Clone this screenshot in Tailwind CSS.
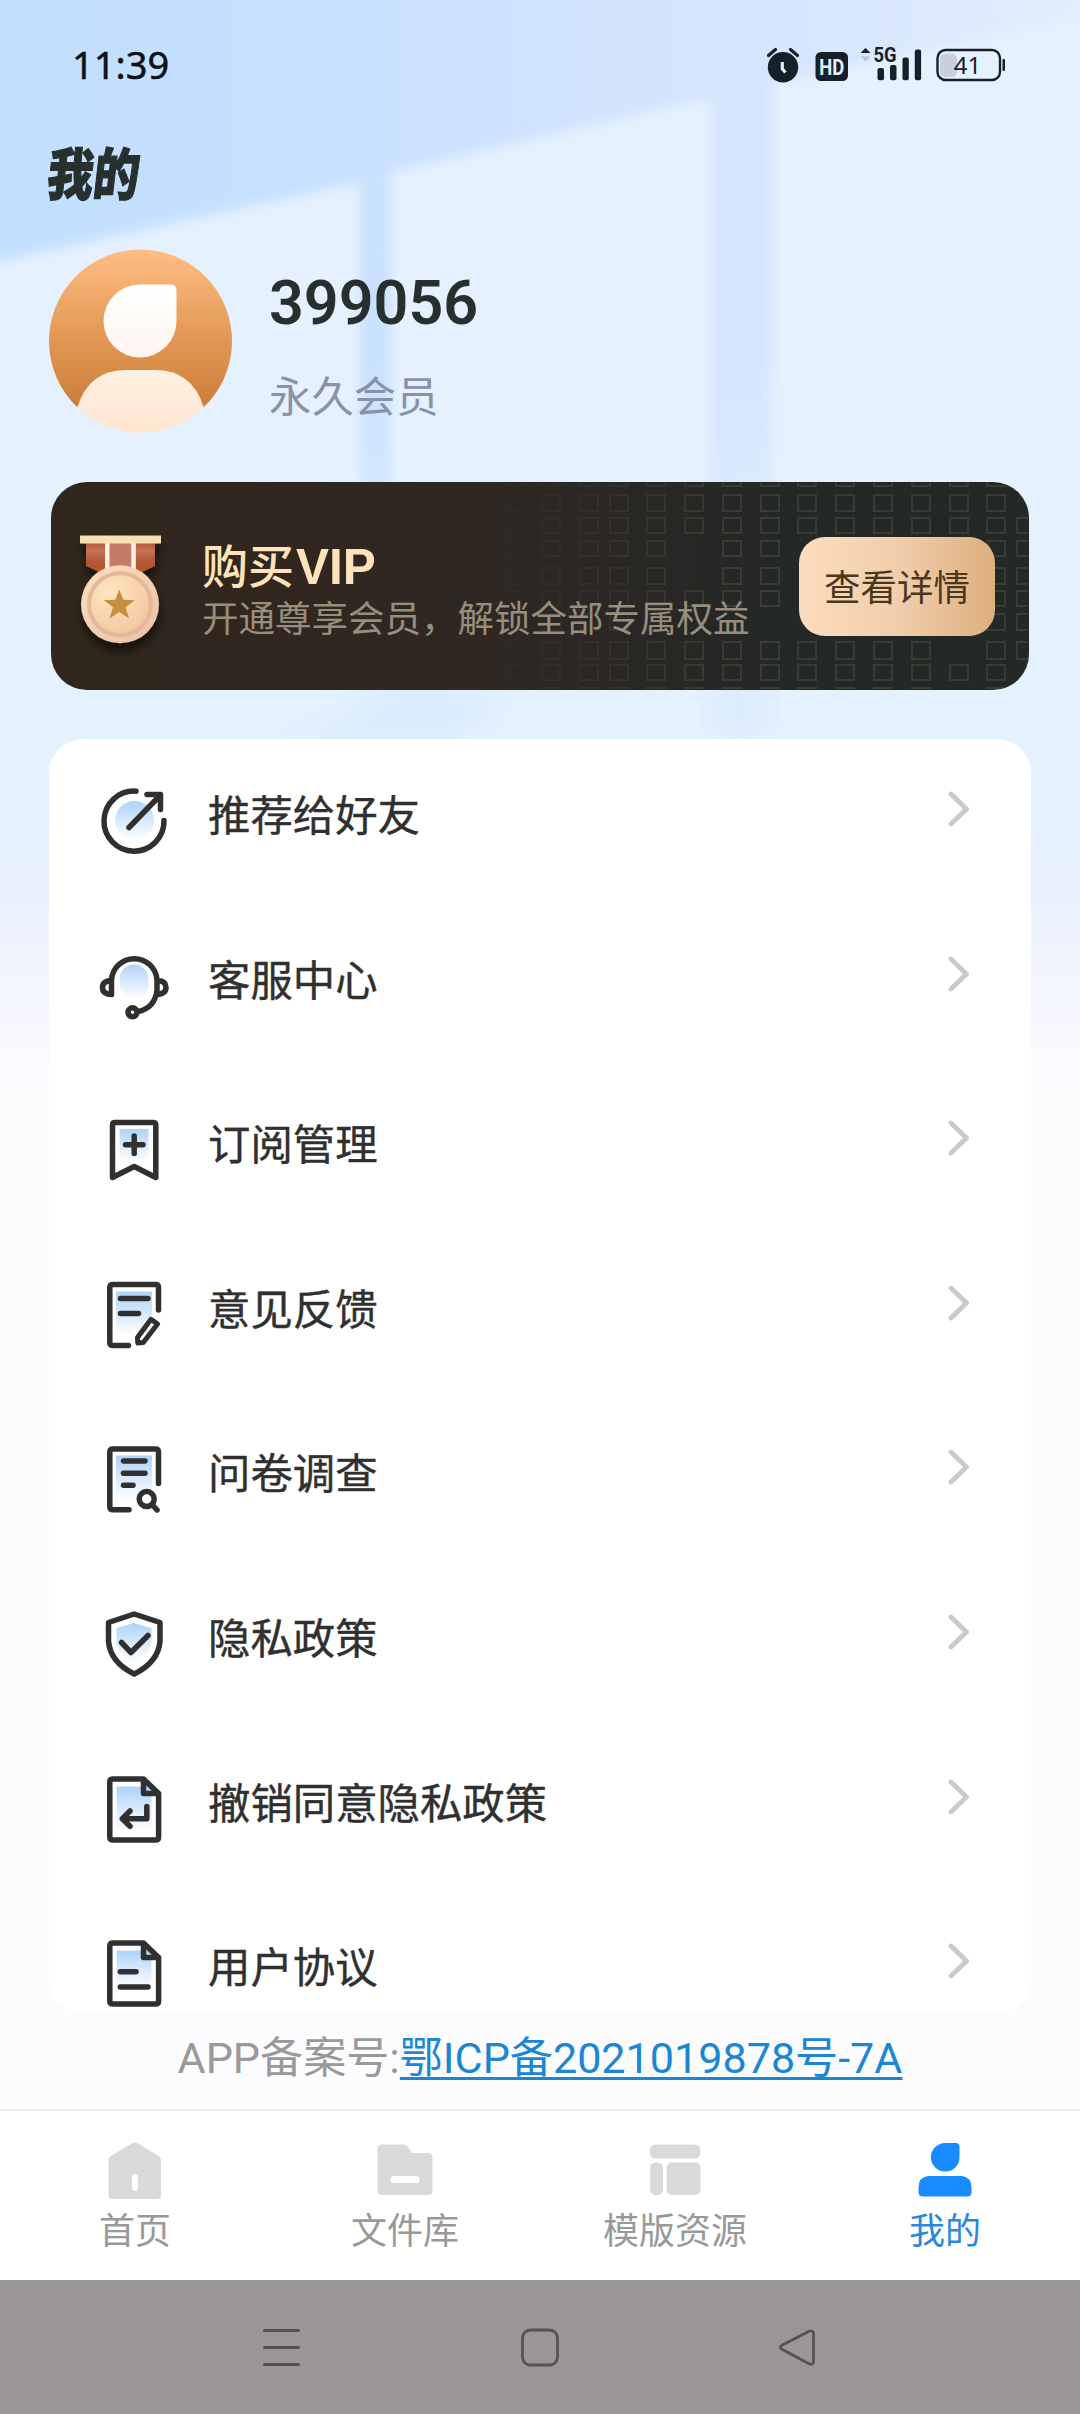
<!DOCTYPE html>
<html lang="zh-CN">
<head>
<meta charset="UTF-8">
<title>我的</title>
<script src="https://cdn.jsdelivr.net/npm/@tailwindcss/browser@4"></script>
</head>
<body class="w-[1080px] h-[2414px] overflow-hidden bg-[#fcfbfe] font-['Roboto','Noto_Sans_CJK_SC',sans-serif] text-[#303030]">
<div class="relative flex h-[2414px] w-[1080px] flex-col overflow-hidden">

  <!-- window-light backdrop -->
  <svg class="absolute inset-0 -z-10" width="1080" height="1200" viewBox="0 0 1080 1200" aria-hidden="true">
    <defs>
      <linearGradient id="sky" x1="0" y1="0" x2="1080" y2="0" gradientUnits="userSpaceOnUse">
        <stop offset="0" stop-color="#c3dffe"/><stop offset=".28" stop-color="#c6e0fe"/><stop offset=".4" stop-color="#cce2fe"/><stop offset=".6" stop-color="#d4e4fe"/><stop offset=".8" stop-color="#d9e7fe"/><stop offset="1" stop-color="#e2eefe"/>
      </linearGradient>
      <linearGradient id="fade" x1="0" y1="0" x2="0" y2="1200" gradientUnits="userSpaceOnUse">
        <stop offset="0" stop-color="#e5f1fe" stop-opacity="0"/><stop offset=".3" stop-color="#e5f1fe" stop-opacity="0"/><stop offset=".6" stop-color="#e4f1fe"/><stop offset=".7" stop-color="#e5f1fe"/><stop offset=".75" stop-color="#eaf1fe"/><stop offset=".82" stop-color="#f3f5ff"/><stop offset=".9" stop-color="#fcfbfe"/><stop offset="1" stop-color="#fcfbfe"/>
      </linearGradient>
      <filter id="soft" x="-10%" y="-10%" width="120%" height="120%"><feGaussianBlur stdDeviation="6"/></filter>
      <filter id="softer" x="-20%" y="-60%" width="140%" height="220%"><feGaussianBlur stdDeviation="14"/></filter>
    </defs>
    <rect width="1080" height="1200" fill="url(#sky)"/>
    <g filter="url(#soft)" fill="#e5f1fe">
      <path d="M-40 270L360 182V1240H-40Z"/>
      <path d="M391 172L710 98V1240H391Z"/>
      <path d="M772 84L1120 8V1240H772Z"/>
    </g>
    <rect width="1080" height="1200" fill="url(#fade)"/>
    <path d="M270 745Q360 715 400 680L500 690Q480 745 420 745Z" fill="#d6e8fe" opacity=".6" filter="url(#softer)"/>
    <rect x="712" y="680" width="56" height="60" fill="#d9e9fe" opacity=".7" filter="url(#softer)"/>
  </svg>

  <!-- status bar -->
  <header class="flex h-[130px] items-center justify-between pl-[72px] pr-[74px]">
    <span class="-mt-[2px] font-['Noto_Sans'] text-[38px] leading-none text-[#0d1218] [-webkit-text-stroke:0.5px]">11:39</span>
    <svg class="overflow-visible" width="241" height="60" viewBox="765 35 241 60" fill="#15202a">
      <circle cx="783" cy="67.300" r="15.200"/>
      <path d="M768.500 55.500l7-6M790.500 49.500l7 6" stroke="#15202a" stroke-width="3.200" stroke-linecap="round"/>
      <path d="M782.300 62v7l3.200 3.500" fill="none" stroke="#e4effc" stroke-width="3.200"/>
      <rect x="815.500" y="52" width="32.500" height="29" rx="5.500"/>
      <text x="831.800" y="74.500" text-anchor="middle" font-family="Roboto" font-weight="700" font-size="22" textLength="25" lengthAdjust="spacingAndGlyphs" fill="#e4effc">HD</text>
      <path d="M865.500 48l5 5h-10z"/><path d="M865.500 61.500l5-5h-10z" fill="#b9c4d2"/>
      <text x="873.500" y="62" font-family="Roboto" font-weight="700" font-size="20.500" textLength="23" lengthAdjust="spacingAndGlyphs">5G</text>
      <rect x="877.500" y="68" width="6.500" height="12.200" rx="2"/>
      <rect x="890" y="65" width="6.500" height="15.200" rx="2"/>
      <rect x="902.500" y="57.500" width="6.300" height="22.700" rx="2"/>
      <rect x="914.800" y="49.500" width="6.300" height="30.700" rx="2"/>
      <rect x="940" y="53.500" width="17" height="23.500" rx="5" fill="#cacfdd"/>
      <rect x="937.500" y="50" width="62.500" height="30" rx="8" fill="none" stroke="#15202a" stroke-width="2.400"/>
      <rect x="1002.500" y="59" width="2.500" height="12" rx="1"/>
      <text x="967.500" y="73.500" text-anchor="middle" font-family="Noto Sans" font-size="24">41</text>
    </svg>
  </header>

  <h1 class="ml-[48px] -mt-px h-[88px] w-[100px] origin-center -skew-x-[8deg] scale-y-[1.22] text-[46px] font-black leading-[92px] text-[#28302f] [-webkit-text-stroke:1px]">我的</h1>

  <!-- profile -->
  <section class="mt-[32px] flex h-[184px] items-start gap-[36px] pl-[49px]">
    <svg width="184" height="184" viewBox="0.500 0 184 184">
      <defs>
        <linearGradient id="av" x1="0" y1="0" x2="0" y2="1"><stop offset="0" stop-color="#ffbd85"/><stop offset=".5" stop-color="#e59c58"/><stop offset="1" stop-color="#cb7d39"/></linearGradient>
        <linearGradient id="bd" x1="0" y1="0" x2="0" y2="1"><stop offset="0" stop-color="#fff0e2"/><stop offset="1" stop-color="#fee6d0"/></linearGradient>
        <linearGradient id="hd" x1="0" y1="0" x2="0" y2="1"><stop offset="0" stop-color="#fff"/><stop offset="1" stop-color="#fff5f0"/></linearGradient>
        <clipPath id="cc"><circle cx="92" cy="92" r="91.800"/></clipPath>
      </defs>
      <path d="M30 159.300A91.500 91.500 0 1 1 154 159.300Z" fill="url(#av)"/>
      <path d="M91.500 35.500H122Q128 35.500 128 41.500V72A36.500 36.500 0 1 1 91.500 35.500Z" fill="url(#hd)"/>
      <path clip-path="url(#cc)" d="M26 186L29 158Q40 121 78 121H106Q144 121 155 158L158 186Z" fill="url(#bd)"/>
    </svg>
    <div class="flex flex-col">
      <div class="mt-[19px] text-[61px] font-semibold leading-[70px] text-[#28302f]">399056</div>
      <div class="mt-[30px] text-[42.400px] leading-[60px] text-[#8a92a8]">永久会员</div>
    </div>
  </section>

  <!-- vip banner -->
  <section class="relative ml-[51px] mt-[49px] flex h-[208px] w-[978px] items-center overflow-hidden rounded-[36px] bg-gradient-to-r from-[#30261b] via-[#302722] via-40% to-[#242827] to-75%">
    <svg class="absolute inset-0" width="978" height="208" viewBox="0 0 978 208" fill="none" stroke="#45433a" stroke-width="2">
      <defs>
        <linearGradient id="mg" x1="420" x2="690" y1="0" y2="0" gradientUnits="userSpaceOnUse"><stop offset="0" stop-color="#fff" stop-opacity="0"/><stop offset="1" stop-color="#fff"/></linearGradient>
        <mask id="mk" maskUnits="userSpaceOnUse" x="0" y="0" width="978" height="208"><rect width="978" height="208" fill="url(#mg)"/></mask>
        <g id="ends"><path d="M0-14h18v18H0zM0 13h18v16H0zM0 36h18v15H0zM0 160h18v17H0zM0 183h18v15H0zM0 206h18v18H0z"/></g>
        <g id="mids"><path d="M0 59h18v15H0zM0 86h18v16H0zM0 109h18v15H0zM0 132h18v16H0z"/></g>
      </defs>
      <g mask="url(#mk)" opacity=".7">
        <use href="#ends" x="454"/><use href="#mids" x="454"/>
        <use href="#ends" x="491"/><use href="#mids" x="491"/>
        <use href="#ends" x="529"/><use href="#mids" x="529"/>
        <use href="#ends" x="559"/><use href="#mids" x="559"/>
        <use href="#ends" x="596"/><use href="#mids" x="596"/>
        <use href="#ends" x="634"/><path d="M634 109h18v15h-18z"/>
        <use href="#ends" x="672"/><path d="M672 59h18v15h-18zM672 86h18v16h-18zM672 109h18v15h-18z"/>
        <use href="#ends" x="710"/><path d="M710 59h18v15h-18zM710 86h18v16h-18zM710 109h18v15h-18z"/>
        <use href="#ends" x="747"/><use href="#ends" x="785"/><use href="#ends" x="823"/><use href="#ends" x="861"/>
        <path d="M899-14h18v18h-18zM899 13h18v16h-18zM899 36h18v15h-18zM899 183h18v15h-18z"/>
        <use href="#ends" x="936"/><use href="#mids" x="936"/>
        <path d="M966 36h18v15h-18zM966 160h18v17h-18z"/><use href="#mids" x="966"/>
      </g>
    </svg>
    <svg class="relative ml-[19px] mt-[18px] shrink-0" width="104" height="140" viewBox="0 0 104 140">
      <defs>
        <linearGradient id="rb" x1="0" x2="0" y1="0" y2="1"><stop offset="0" stop-color="#a84a2c"/><stop offset=".35" stop-color="#c77259"/><stop offset=".6" stop-color="#b45a3c"/><stop offset="1" stop-color="#b85128"/></linearGradient>
        <linearGradient id="ds" x1="0" x2="1" y1="0" y2="1"><stop offset="0" stop-color="#f9dec0"/><stop offset="1" stop-color="#ecc2a6"/></linearGradient>
        <radialGradient id="in" cx=".35" cy=".3" r=".8"><stop offset="0" stop-color="#ffe6bf"/><stop offset="1" stop-color="#f1c5a0"/></radialGradient>
        <filter id="sh" x="-30%" y="-30%" width="160%" height="170%"><feDropShadow dx="1" dy="8" stdDeviation="5" flood-color="#000" flood-opacity=".55"/></filter>
      </defs>
      <g filter="url(#sh)">
        <path d="M16 14H85V41L70 48H31L16 41Z" fill="url(#rb)"/>
        <path d="M39 16H62V48H39Z" fill="#c47b68"/>
        <path d="M35 16h4.500v30H35zM61.300 16h4.500v30h-4.500z" fill="#fff0df"/>
        <path d="M10 10.500h81v8H10z" fill="#f9dfb4"/>
        <circle cx="50" cy="79.300" r="39" fill="url(#ds)"/>
      </g>
      <circle cx="50" cy="79.300" r="31" fill="url(#in)" stroke="#e4b898" stroke-width="4"/>
      <path d="M49.300 64.500l4 10.300 11.500.4-9.200 7 3.500 11.300-9.800-6.600-9.800 6.600 3.500-11.300-9.200-7 11.500-.4z" fill="#c58f3e"/>
    </svg>
    <div class="relative ml-[28px] mt-[10px] flex flex-col">
      <div class="flex items-center text-[46px] font-medium leading-[58px] text-[#fde2bc]">购买<span class="-mt-px ml-[2px] font-['Liberation_Sans'] text-[49.500px] font-bold">VIP</span></div>
      <div class="whitespace-nowrap text-[36.500px] leading-[48px] text-[#998d7c]">开通尊享会员，解锁全部专属权益</div>
    </div>
    <button class="absolute left-[748px] top-[55px] flex h-[99px] w-[196px] items-center justify-center rounded-[26px] bg-gradient-to-r from-[#fbdcbc] via-[#f1ceac] to-[#deaf7e] pt-[6px] text-[36.500px] text-[#49371e]">查看详情</button>
  </section>

  <!-- menu card -->
  <svg class="absolute" width="0" height="0">
    <defs>
      <linearGradient id="bl" x1="0" x2="0" y1="0" y2="1"><stop offset="0" stop-color="#aed3fa"/><stop offset="1" stop-color="#fff"/></linearGradient>
    </defs>
  </svg>
  <main class="ml-[49px] mt-[49px] flex h-[1274px] w-[982px] flex-col overflow-hidden rounded-[34px] bg-white [-webkit-text-stroke:0.4px]">
    <div class="flex h-[164.600px] shrink-0 items-start pl-[49px] pr-[60px] pt-[46px]">
      <svg width="72" height="72" viewBox="0 0 72 72" fill="none" stroke="#303030" stroke-width="5.500" stroke-linecap="round" stroke-linejoin="round"><circle cx="36.500" cy="35.500" r="19.500" fill="url(#bl)" stroke="none"/><path d="M38 6.200A30 30 0 1 0 66 35.500M31 42.500L62.500 10M49 9.500H62.500V24.500"/></svg>
      <span class="ml-[38px] mt-[2px] text-[42.400px] leading-[60px]">推荐给好友</span>
      <svg class="ml-auto mt-[6px]" width="24" height="36" viewBox="0 0 24 36" fill="none" stroke="#cacaca" stroke-width="4.800" stroke-linecap="round" stroke-linejoin="round"><path d="M4 3L19.500 18L4 33"/></svg>
    </div>
    <div class="flex h-[164.600px] shrink-0 items-start pl-[49px] pr-[60px] pt-[46px]">
      <svg width="72" height="72" viewBox="0 0 72 72" fill="none" stroke="#303030" stroke-width="5.500" stroke-linecap="round" stroke-linejoin="round"><rect x="21.500" y="14.500" width="29" height="34" rx="14.500" fill="url(#bl)" stroke="none"/><path d="M13.500 44.500V30A22.800 22.800 0 0 1 59 30V40Q57 58 40 61.500M13.500 30.500Q4.500 31 4.500 37.500T13.500 44.500M59.500 30.500Q68 31 68 37.500T58.500 44.500"/><circle cx="34.500" cy="62.300" r="4.500"/></svg>
      <span class="ml-[38px] mt-[2px] text-[42.400px] leading-[60px]">客服中心</span>
      <svg class="ml-auto mt-[6px]" width="24" height="36" viewBox="0 0 24 36" fill="none" stroke="#cacaca" stroke-width="4.800" stroke-linecap="round" stroke-linejoin="round"><path d="M4 3L19.500 18L4 33"/></svg>
    </div>
    <div class="flex h-[164.600px] shrink-0 items-start pl-[49px] pr-[60px] pt-[46px]">
      <svg width="72" height="72" viewBox="0 0 72 72" fill="none" stroke="#303030" stroke-width="5.500" stroke-linecap="round" stroke-linejoin="round"><path d="M21.500 15h29v32h-29z" fill="url(#bl)" stroke="none"/><path d="M14.500 63.500V11Q14.500 8.500 17 8.500H55Q57.800 8.500 57.800 11V63.500L36.200 52.500ZM27.500 30.800h17.500M36.200 22v17.500"/></svg>
      <span class="ml-[38px] mt-[2px] text-[42.400px] leading-[60px]">订阅管理</span>
      <svg class="ml-auto mt-[6px]" width="24" height="36" viewBox="0 0 24 36" fill="none" stroke="#cacaca" stroke-width="4.800" stroke-linecap="round" stroke-linejoin="round"><path d="M4 3L19.500 18L4 33"/></svg>
    </div>
    <div class="flex h-[164.600px] shrink-0 items-start pl-[49px] pr-[60px] pt-[46px]">
      <svg width="72" height="72" viewBox="0 0 72 72" fill="none" stroke="#303030" stroke-width="5.500" stroke-linecap="round" stroke-linejoin="round"><path d="M18 12.500h36v44h-36z" fill="url(#bl)" stroke="none"/><path d="M30.500 66.500H15Q11.800 66.500 11.800 63.500V8.500Q11.800 5.500 15 5.500H57.500Q60.500 5.500 60.500 8.500V31M22.500 19.500H50M22.500 34.500H40.500"/><path d="M53 40.300L59.500 45L45.300 63.500L39.800 64L39.500 58.500Z" stroke-width="5"/></svg>
      <span class="ml-[38px] mt-[2px] text-[42.400px] leading-[60px]">意见反馈</span>
      <svg class="ml-auto mt-[6px]" width="24" height="36" viewBox="0 0 24 36" fill="none" stroke="#cacaca" stroke-width="4.800" stroke-linecap="round" stroke-linejoin="round"><path d="M4 3L19.500 18L4 33"/></svg>
    </div>
    <div class="flex h-[164.600px] shrink-0 items-start pl-[49px] pr-[60px] pt-[46px]">
      <svg width="72" height="72" viewBox="0 0 72 72" fill="none" stroke="#303030" stroke-width="5.500" stroke-linecap="round" stroke-linejoin="round"><path d="M18 12.500h36v44h-36z" fill="url(#bl)" stroke="none"/><path d="M31 66.700H15Q11.800 66.700 11.800 63.700V9Q11.800 6 15 6H57.500Q60.500 6 60.500 9V40.500M25.500 18H47M25.500 30.300H47M25.500 42.300H35"/><circle cx="48.700" cy="56" r="7.500" fill="#fff"/><path d="M54.500 62L59 67"/></svg>
      <span class="ml-[38px] mt-[2px] text-[42.400px] leading-[60px]">问卷调查</span>
      <svg class="ml-auto mt-[6px]" width="24" height="36" viewBox="0 0 24 36" fill="none" stroke="#cacaca" stroke-width="4.800" stroke-linecap="round" stroke-linejoin="round"><path d="M4 3L19.500 18L4 33"/></svg>
    </div>
    <div class="flex h-[164.600px] shrink-0 items-start pl-[49px] pr-[60px] pt-[46px]">
      <svg width="72" height="72" viewBox="0 0 72 72" fill="none" stroke="#303030" stroke-width="5.500" stroke-linecap="round" stroke-linejoin="round"><path d="M18.500 20L36 15L53.500 20V36Q50 48 36 54Q22 48 18.500 36Z" fill="url(#bl)" stroke="none"/><path d="M36.200 6L62 14.500V33Q60.500 54 36.200 66Q12 54 10.500 33V14.500ZM23.500 34.500L33 44.500L50 27.500"/></svg>
      <span class="ml-[38px] mt-[2px] text-[42.400px] leading-[60px]">隐私政策</span>
      <svg class="ml-auto mt-[6px]" width="24" height="36" viewBox="0 0 24 36" fill="none" stroke="#cacaca" stroke-width="4.800" stroke-linecap="round" stroke-linejoin="round"><path d="M4 3L19.500 18L4 33"/></svg>
    </div>
    <div class="flex h-[164.600px] shrink-0 items-start pl-[49px] pr-[60px] pt-[46px]">
      <svg width="72" height="72" viewBox="0 0 72 72" fill="none" stroke="#303030" stroke-width="5.500" stroke-linecap="round" stroke-linejoin="round"><path d="M18.500 13.500h35v44h-35z" fill="url(#bl)" stroke="none"/><path d="M45.500 6H15Q11.800 6 11.800 9V64Q11.800 67 15 67H57.500Q60.600 67 60.600 64V20.500ZM45.500 6V20.500H60.600"/><path d="M48.800 33.500V45.700H24.500M32 38L24.300 45.700L32 53.300"/></svg>
      <span class="ml-[38px] mt-[2px] text-[42.400px] leading-[60px]">撤销同意隐私政策</span>
      <svg class="ml-auto mt-[6px]" width="24" height="36" viewBox="0 0 24 36" fill="none" stroke="#cacaca" stroke-width="4.800" stroke-linecap="round" stroke-linejoin="round"><path d="M4 3L19.500 18L4 33"/></svg>
    </div>
    <div class="flex h-[164.600px] shrink-0 items-start pl-[49px] pr-[60px] pt-[46px]">
      <svg width="72" height="72" viewBox="0 0 72 72" fill="none" stroke="#303030" stroke-width="5.500" stroke-linecap="round" stroke-linejoin="round"><path d="M18.500 13.500h35v38h-35z" fill="url(#bl)" stroke="none"/><path d="M45.500 6H15Q11.800 6 11.800 9V64Q11.800 67 15 67H57.500Q60.600 67 60.600 64V20.500ZM45.500 6V20.500H60.600"/><path d="M22.300 34.800H38M22.300 50H50"/></svg>
      <span class="ml-[38px] mt-[2px] text-[42.400px] leading-[60px]">用户协议</span>
      <svg class="ml-auto mt-[6px]" width="24" height="36" viewBox="0 0 24 36" fill="none" stroke="#cacaca" stroke-width="4.800" stroke-linecap="round" stroke-linejoin="round"><path d="M4 3L19.500 18L4 33"/></svg>
    </div>
  </main>

  <p class="flex h-[96px] items-center justify-center whitespace-nowrap pb-[4px] text-[43.100px] text-[#999]">APP备案号:<a class="text-[#1b86d2] underline decoration-[2.500px] underline-offset-[4px]">鄂ICP备2021019878号-7A</a></p>

  <!-- tab bar -->
  <nav class="grid h-[171px] grid-cols-4 border-t-2 border-[#ededf0] bg-white text-[36px] text-[#999]">
    <a class="flex flex-col items-center pt-[27px]">
      <svg width="64" height="64" viewBox="0 0 64 64"><path d="M29 5.500Q32 3.500 35 5.500L55 17.500Q58 19.500 58 23V57Q58 61 54 61H9.500Q5.500 61 5.500 57V23Q5.500 19.500 8.500 17.500Z" fill="#dad8db"/><rect x="29" y="36" width="6" height="17" rx="3" fill="#fff"/></svg>
      <span class="mt-[4px] leading-[52px]">首页</span></a>
    <a class="flex flex-col items-center pt-[27px]">
      <svg width="64" height="64" viewBox="0 0 64 64"><path d="M9 6.500H30Q33 6.500 35 9L39 15H55Q59.500 15 59.500 19.500V53Q59.500 57 55 57H9Q4.500 57 4.500 53V11Q4.500 6.500 9 6.500Z" fill="#dad8db"/><rect x="17.500" y="38" width="29" height="7" rx="3.500" fill="#fff"/></svg>
      <span class="mt-[4px] leading-[52px]">文件库</span></a>
    <a class="flex flex-col items-center pt-[27px]">
      <svg width="64" height="64" viewBox="0 0 64 64" fill="#dad8db"><rect x="7" y="6.500" width="50.500" height="14" rx="5.500"/><rect x="7" y="24.500" width="13" height="32.500" rx="5.500"/><rect x="23.700" y="24.500" width="33.800" height="32.500" rx="5"/></svg>
      <span class="mt-[4px] leading-[52px]">模版资源</span></a>
    <a class="flex flex-col items-center pt-[27px] text-[#2a87e0]">
      <svg width="64" height="64" viewBox="0 0 64 64" fill="#178bff"><path d="M32 5H43Q46.500 5 46.500 8.500V19A14.300 14.300 0 1 1 32 5Z"/><path d="M15 38H49Q58.500 39 58.500 50V54Q58.500 58.500 54 58.500H10Q5.500 58.500 5.500 54V50Q5.500 39 15 38Z"/></svg>
      <span class="mt-[4px] leading-[52px]">我的</span></a>
  </nav>

  <!-- system navigation -->
  <footer class="flex h-[134px] items-center justify-between border-t-2 border-[#979795] bg-[#9b9499] pb-[2px] pl-[261px] pr-[262px]">
    <svg width="41" height="41" viewBox="0 0 41 41" stroke="#545254" stroke-width="3" stroke-linecap="round"><path d="M3.500 3.500h34M3.500 20.500h34M3.500 37.500h34"/></svg>
    <svg width="41" height="41" viewBox="0 0 41 41" fill="none" stroke="#545254" stroke-width="2.800"><rect x="3.500" y="3" width="35" height="35" rx="8"/></svg>
    <svg width="41" height="41" viewBox="0 0 41 41" fill="none" stroke="#545254" stroke-width="2.800" stroke-linejoin="round"><path d="M4.500 18.500L32.500 4Q36 3 36.500 6.500V34.500Q36 38 32.500 37L4.500 22Q2 20.500 4.500 18.500Z"/></svg>
  </footer>
</div>
</body>
</html>
